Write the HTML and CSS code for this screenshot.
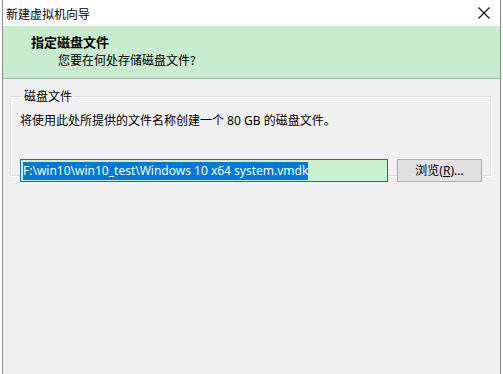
FILE: index.html
```html
<!DOCTYPE html>
<html>
<head>
    <meta charset="utf-8" />
    <title>新建虚拟机向导</title>
    <link rel="stylesheet" href="styles.css">
</head>
<body>
    <div class="dialog">
        <div class="titleBar">
            <span class="titleText">新建虚拟机向导</span>
            <span class="closeBtn">
                <svg width="12" height="12" viewBox="0 0 12 12"><path d="M0.5 0.5L11.5 11.5M11.5 0.5L0.5 11.5" stroke="#111" stroke-width="1.1" fill="none"/></svg>
            </span>
        </div>
        <div class="wizardHeader">
            <div class="headTitle">指定磁盘文件</div>
            <div class="headSub">您要在何处存储磁盘文件?</div>
        </div>
        <div class="content">
            <fieldset class="groupBox">
                <legend>磁盘文件</legend>
                <div class="info">将使用此处所提供的文件名称创建一个 80 GB 的磁盘文件。</div>
                <div class="pathRow">
                    <div class="pathInput"><span class="sel">F:\win10\win10_test\Windows 10 x64 system.vmdk</span></div>
                    <div class="browseBtn">浏览(<u>R</u>)...</div>
                </div>
            </fieldset>
        </div>
    </div>
</body>
</html>
```

FILE: styles.css
```css
html, body
{
    margin:0;
    padding:0;
    background:#fafafa;
}
body
{
    font-family:"Noto Sans", "Noto Sans CJK SC", sans-serif;
    font-size:12px;
    color:#000;
}
.dialog
{
    margin-left:2px;
    width:497px;
    height:374px;
    border-left:1px solid #8a8a8a;
    border-right:1px solid #8a8a8a;
    background:#f0f0f0;
}
.titleBar
{
    height:26px;
    background:#fff;
    display:flex;
    align-items:center;
    justify-content:space-between;
    padding:0 8px 0 3px;
}
.titleText
{
    font-family:"Noto Sans CJK SC", sans-serif;
    font-size:12px;
}
.closeBtn
{
    display:flex;
    padding-right:2px;
}
.wizardHeader
{
    height:53px;
    background:#c7ebcc;
    border-bottom:1px solid #a8b0a8;
    box-sizing:border-box;
    padding:7px 0 0 28px;
    font-family:"Noto Sans CJK SC", sans-serif;
}
.headTitle
{
    font-weight:bold;
    font-size:13px;
    line-height:18px;
}
.headSub
{
    padding-left:27px;
    line-height:18px;
}
.content
{
    padding:10px 10px 0 7px;
}
.groupBox
{
    margin:0;
    padding:0 8px 0 9px;
    border:1px solid #dcdcdc;
    box-shadow:inset 1px 1px 0 #fff, 1px 1px 0 #fff;
    height:85px;
}
.groupBox legend
{
    padding:0 2px;
    margin-left:2px;
    font-family:"Noto Sans CJK SC", sans-serif;
    line-height:14px;
}
.info
{
    margin-top:9px;
    font-family:"Noto Sans", "Noto Sans CJK SC", sans-serif;
    line-height:18px;
}
.pathRow
{
    display:flex;
    align-items:center;
    gap:9px;
    margin-top:29px;
}
.pathInput
{
    width:362px;
    height:21px;
    border:1px solid #1b6fa8;
    background:#c8f0d0;
    box-sizing:content-box;
    padding:0 2px;
    display:flex;
    align-items:center;
}
.sel
{
    background:#0078d7;
    color:#fff;
    line-height:18px;
    white-space:nowrap;
}
.browseBtn
{
    width:83px;
    height:21px;
    background:#e1e1e1;
    border:1px solid #adadad;
    text-align:center;
    line-height:21px;
    font-family:"Noto Sans", "Noto Sans CJK SC", sans-serif;
}
```
